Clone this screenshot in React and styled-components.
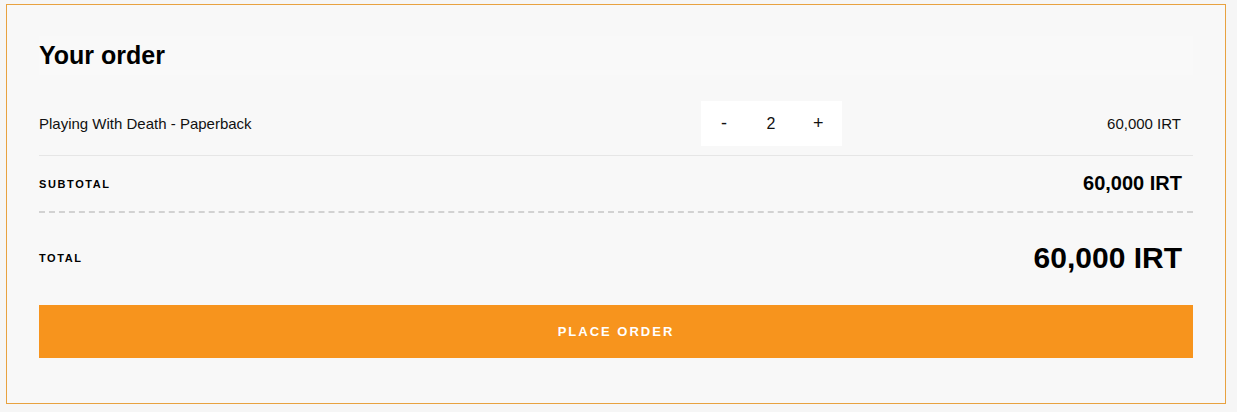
import styled, { createGlobalStyle } from "styled-components";

const GlobalStyle = createGlobalStyle`
  body {
    margin: 0;
    background: #f6f6f6;
    font-family: "Liberation Sans", Arial, sans-serif;
    color: #111;
  }
`;

function App() {
  return (
    <>
      <GlobalStyle />
      <OrderBox>
        <Title>Your order</Title>
        <ItemRow>
          <ItemName>Playing With Death - Paperback</ItemName>
          <Qty>
            <QtyBtn>-</QtyBtn>
            <span>2</span>
            <QtyBtn>+</QtyBtn>
          </Qty>
          <ItemPrice>60,000 IRT</ItemPrice>
        </ItemRow>
        <SumRow dashed>
          <Label>SUBTOTAL</Label>
          <Amount size={20}>60,000 IRT</Amount>
        </SumRow>
        <SumRow tall>
          <Label>TOTAL</Label>
          <Amount size={30}>60,000 IRT</Amount>
        </SumRow>
        <PlaceButton>PLACE ORDER</PlaceButton>
      </OrderBox>
    </>
  );
}

export default App;

const OrderBox = styled.div`
  box-sizing: border-box;
  width: 1220px;
  height: 400px;
  margin: 4px 0 0 6px;
  border: 1px solid #e8a240;
  background: #f8f8f8;
  padding: 31px 32px 0 32px;
`;

const Title = styled.h2`
  margin: 0 0 17px;
  padding: 7px 0 8px;
  background: #f9f9f9;
  font-size: 25px;
  line-height: 24px;
  font-weight: 700;
  color: #000;
`;

const ItemRow = styled.div`
  display: grid;
  grid-template-columns: 662px 141px 1fr;
  align-items: center;
  height: 63px;
  border-bottom: 1px solid #e6e6e6;
  font-size: 15px;
`;

const ItemName = styled.div`
  color: #111;
`;

const Qty = styled.div`
  display: flex;
  align-items: center;
  justify-content: space-between;
  height: 45px;
  padding: 0 19px 0 18px;
  background: #fff;
  font-size: 16px;
  color: #111;
`;

const QtyBtn = styled.span`
  font-size: 18px;
  width: 10px;
  text-align: center;
`;

const ItemPrice = styled.div`
  text-align: right;
  padding-right: 12px;
`;

const SumRow = styled.div`
  display: flex;
  align-items: center;
  justify-content: space-between;
  height: ${(p) => (p.tall ? "89px" : "55px")};
  border-bottom: ${(p) => (p.dashed ? "2px dashed #d2d2d2" : "none")};
  margin-bottom: ${(p) => (p.tall ? "3px" : "0")};
`;

const Label = styled.span`
  font-size: 11px;
  font-weight: 700;
  letter-spacing: 1.6px;
  color: #000;
`;

const Amount = styled.span`
  font-size: ${(p) => p.size}px;
  font-weight: 700;
  padding-right: 11px;
  color: #000;
`;

const PlaceButton = styled.button`
  display: block;
  width: 100%;
  height: 53px;
  border: none;
  background: #f7941d;
  color: #fff;
  font-family: "Liberation Sans", Arial, sans-serif;
  font-size: 13px;
  font-weight: 700;
  letter-spacing: 2px;
  cursor: pointer;
`;
